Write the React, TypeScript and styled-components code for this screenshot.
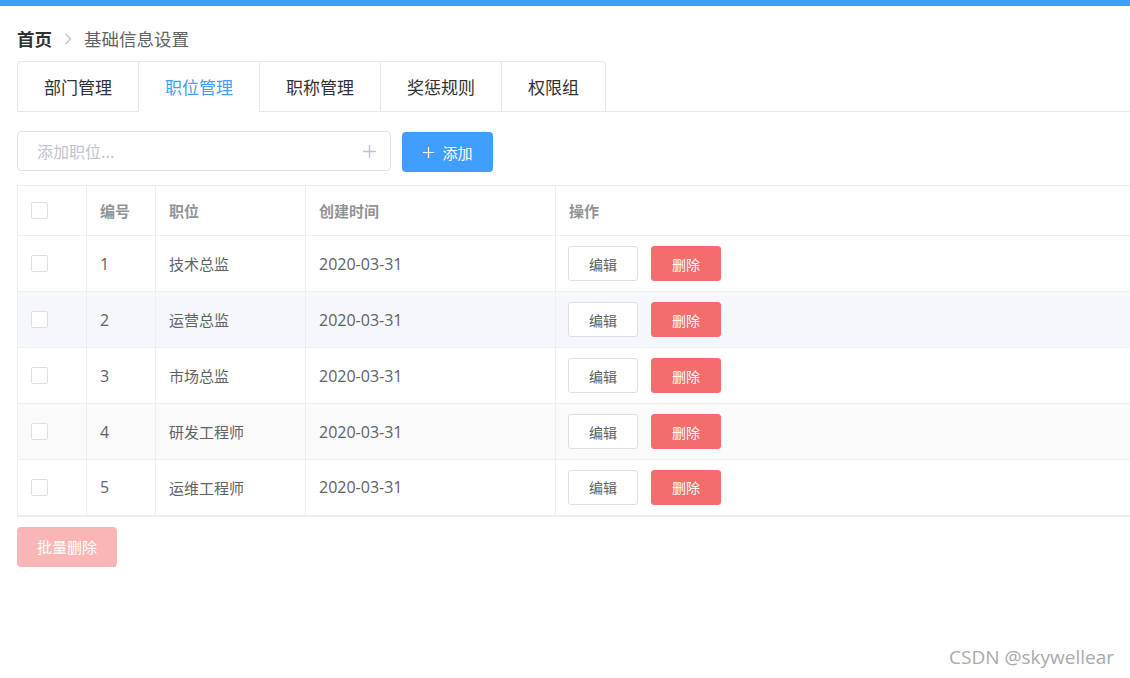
import styled, { createGlobalStyle, css } from 'styled-components';

const GlobalStyle = createGlobalStyle`
  html, body {
    margin: 0;
    padding: 0;
    background: #fff;
    overflow: hidden;
  }
  body {
    font-family: "Open Sans", "Noto Sans CJK SC", sans-serif;
    color: #606266;
  }
  * { box-sizing: border-box; }
`;

const tabs = ['部门管理', '职位管理', '职称管理', '奖惩规则', '权限组'];

const positions = [
  { id: 1, name: '技术总监', date: '2020-03-31' },
  { id: 2, name: '运营总监', date: '2020-03-31' },
  { id: 3, name: '市场总监', date: '2020-03-31' },
  { id: 4, name: '研发工程师', date: '2020-03-31' },
  { id: 5, name: '运维工程师', date: '2020-03-31' },
];

const PlusIcon = ({ size = 14, color = 'currentColor' }: { size?: number; color?: string }) => (
  <svg width={size} height={size} viewBox="0 0 14 14" fill="none">
    <path d="M7 1v12M1 7h12" stroke={color} strokeWidth="1.3" />
  </svg>
);

const ChevronRight = () => (
  <svg width="10" height="14" viewBox="0 0 10 14" fill="none">
    <path d="M2.5 2l5 5-5 5" stroke="#c0c4cc" strokeWidth="1.3" />
  </svg>
);

const App = () => {
  return (
    <>
      <GlobalStyle />
      <TopBar />
      <Page>
        <Breadcrumb>
          <Crumb $strong>首页</Crumb>
          <Separator>
            <ChevronRight />
          </Separator>
          <Crumb>基础信息设置</Crumb>
        </Breadcrumb>

        <TabsHeader>
          <TabList>
            {tabs.map((t, i) => (
              <Tab key={t} $active={i === 1} $first={i === 0}>
                {t}
              </Tab>
            ))}
          </TabList>
        </TabsHeader>

        <Toolbar>
          <InputWrap>
            <Input placeholder="添加职位..." />
            <InputSuffix>
              <PlusIcon size={15} color="#c0c4cc" />
            </InputSuffix>
          </InputWrap>
          <PrimaryButton>
            <PlusIcon size={13} color="#fff" />
            <span>添加</span>
          </PrimaryButton>
        </Toolbar>

        <Table>
          <colgroup>
            <col style={{ width: 69 }} />
            <col style={{ width: 69 }} />
            <col style={{ width: 150 }} />
            <col style={{ width: 250 }} />
            <col />
          </colgroup>
          <thead>
            <tr>
              <Th>
                <Checkbox />
              </Th>
              <Th>编号</Th>
              <Th>职位</Th>
              <Th>创建时间</Th>
              <Th>操作</Th>
            </tr>
          </thead>
          <tbody>
            {positions.map((p, i) => (
              <Row key={p.id} $bg={i === 1 ? '#f5f7fa' : i === 3 ? '#fafafa' : '#fff'}>
                <Td>
                  <Checkbox />
                </Td>
                <Td $num>{p.id}</Td>
                <Td>{p.name}</Td>
                <Td $num>{p.date}</Td>
                <Td>
                  <Actions>
                    <SmallButton>编辑</SmallButton>
                    <SmallButton $danger>删除</SmallButton>
                  </Actions>
                </Td>
              </Row>
            ))}
          </tbody>
        </Table>

        <BatchButton>批量删除</BatchButton>
      </Page>
      <Watermark>CSDN @skywellear</Watermark>
    </>
  );
};

export default App;

const TopBar = styled.div`
  height: 6px;
  background: #409eff;
`;

const Page = styled.div`
  padding: 0 0 0 17px;
  width: 1180px;
`;

const Breadcrumb = styled.div`
  display: flex;
  align-items: center;
  height: 55px;
  padding-top: 10px;
  font-family: "Noto Sans CJK SC", sans-serif;
  font-size: 17.5px;
`;

const Crumb = styled.span<{ $strong?: boolean }>`
  color: ${(p) => (p.$strong ? '#303133' : '#606266')};
  font-weight: ${(p) => (p.$strong ? 700 : 400)};
`;

const Separator = styled.span`
  display: flex;
  align-items: center;
  margin: 0 11px 0 11px;
`;

const TabsHeader = styled.div`
  border-bottom: 1px solid #e4e7ed;
  width: 1113px;
`;

const TabList = styled.div`
  display: inline-flex;
  border: 1px solid #e4e7ed;
  border-bottom: none;
  border-radius: 4px 4px 0 0;
  margin-bottom: -1px;
`;

const Tab = styled.div<{ $active?: boolean; $first?: boolean }>`
  height: 50px;
  padding: 0 26px;
  display: flex;
  align-items: center;
  font-family: "Noto Sans CJK SC", sans-serif;
  font-size: 17px;
  color: ${(p) => (p.$active ? '#409eff' : '#303133')};
  border-left: ${(p) => (p.$first ? 'none' : '1px solid #e4e7ed')};
  border-bottom: 1px solid ${(p) => (p.$active ? '#fff' : '#e4e7ed')};
`;

const Toolbar = styled.div`
  display: flex;
  align-items: center;
  gap: 11px;
  margin-top: 18px;
`;

const InputWrap = styled.div`
  position: relative;
  width: 374px;
  height: 40px;
`;

const Input = styled.input`
  width: 100%;
  height: 100%;
  border: 1px solid #dcdfe6;
  border-radius: 4px;
  padding: 0 40px 0 19px;
  font-family: "Noto Sans CJK SC", sans-serif;
  font-size: 16px;
  color: #606266;
  outline: none;
  &::placeholder {
    color: #c0c4cc;
  }
`;

const InputSuffix = styled.span`
  position: absolute;
  right: 14px;
  top: 0;
  height: 100%;
  display: flex;
  align-items: center;
`;

const PrimaryButton = styled.button`
  display: flex;
  align-items: center;
  justify-content: center;
  gap: 7px;
  width: 91px;
  height: 40px;
  margin-top: 2px;
  border: none;
  border-radius: 4px;
  background: #409eff;
  color: #fff;
  font-family: "Noto Sans CJK SC", sans-serif;
  font-size: 15px;
`;

const Table = styled.table`
  margin-top: 13px;
  width: 1150px;
  border-collapse: collapse;
  table-layout: fixed;
  border-top: 1px solid #ebeef5;
  border-left: 1px solid #ebeef5;
  border-bottom: 2px solid #ebeef5;
  font-family: "Open Sans", "Noto Sans CJK SC", sans-serif;
  font-size: 15px;
`;

const cell = css`
  padding: 0 13px;
  text-align: left;
  border-right: 1px solid #ebeef5;
  border-bottom: 1px solid #ebeef5;
  vertical-align: middle;
`;

const Th = styled.th`
  ${cell};
  height: 50px;
  color: #909399;
  font-weight: 700;
  font-family: "Noto Sans CJK SC", sans-serif;
`;

const Row = styled.tr<{ $bg: string }>`
  background: ${(p) => p.$bg};
`;

const Td = styled.td<{ $num?: boolean }>`
  ${cell};
  height: 56px;
  color: #606266;
  font-size: ${(p) => (p.$num ? '16px' : '15px')};
`;

const Checkbox = styled.span`
  display: block;
  width: 17px;
  height: 17px;
  background: #fff;
  border: 1px solid #dcdfe6;
  border-radius: 2px;
`;

const Actions = styled.div`
  display: flex;
  gap: 13px;
  margin-left: -1px;
`;

const SmallButton = styled.button<{ $danger?: boolean }>`
  width: 70px;
  height: 35px;
  border-radius: 3px;
  font-family: "Noto Sans CJK SC", sans-serif;
  font-size: 14px;
  border: 1px solid ${(p) => (p.$danger ? '#f56c6c' : '#dcdfe6')};
  background: ${(p) => (p.$danger ? '#f56c6c' : '#fff')};
  color: ${(p) => (p.$danger ? '#fff' : '#606266')};
`;

const BatchButton = styled.button`
  margin-top: 10px;
  width: 100px;
  height: 40px;
  border: none;
  border-radius: 4px;
  background: #fab6b6;
  color: #fff;
  font-family: "Noto Sans CJK SC", sans-serif;
  font-size: 15px;
`;

const Watermark = styled.div`
  position: absolute;
  right: 16px;
  bottom: 8px;
  font-family: "Open Sans", sans-serif;
  font-size: 19px;
  color: #a9a9a9;
`;
